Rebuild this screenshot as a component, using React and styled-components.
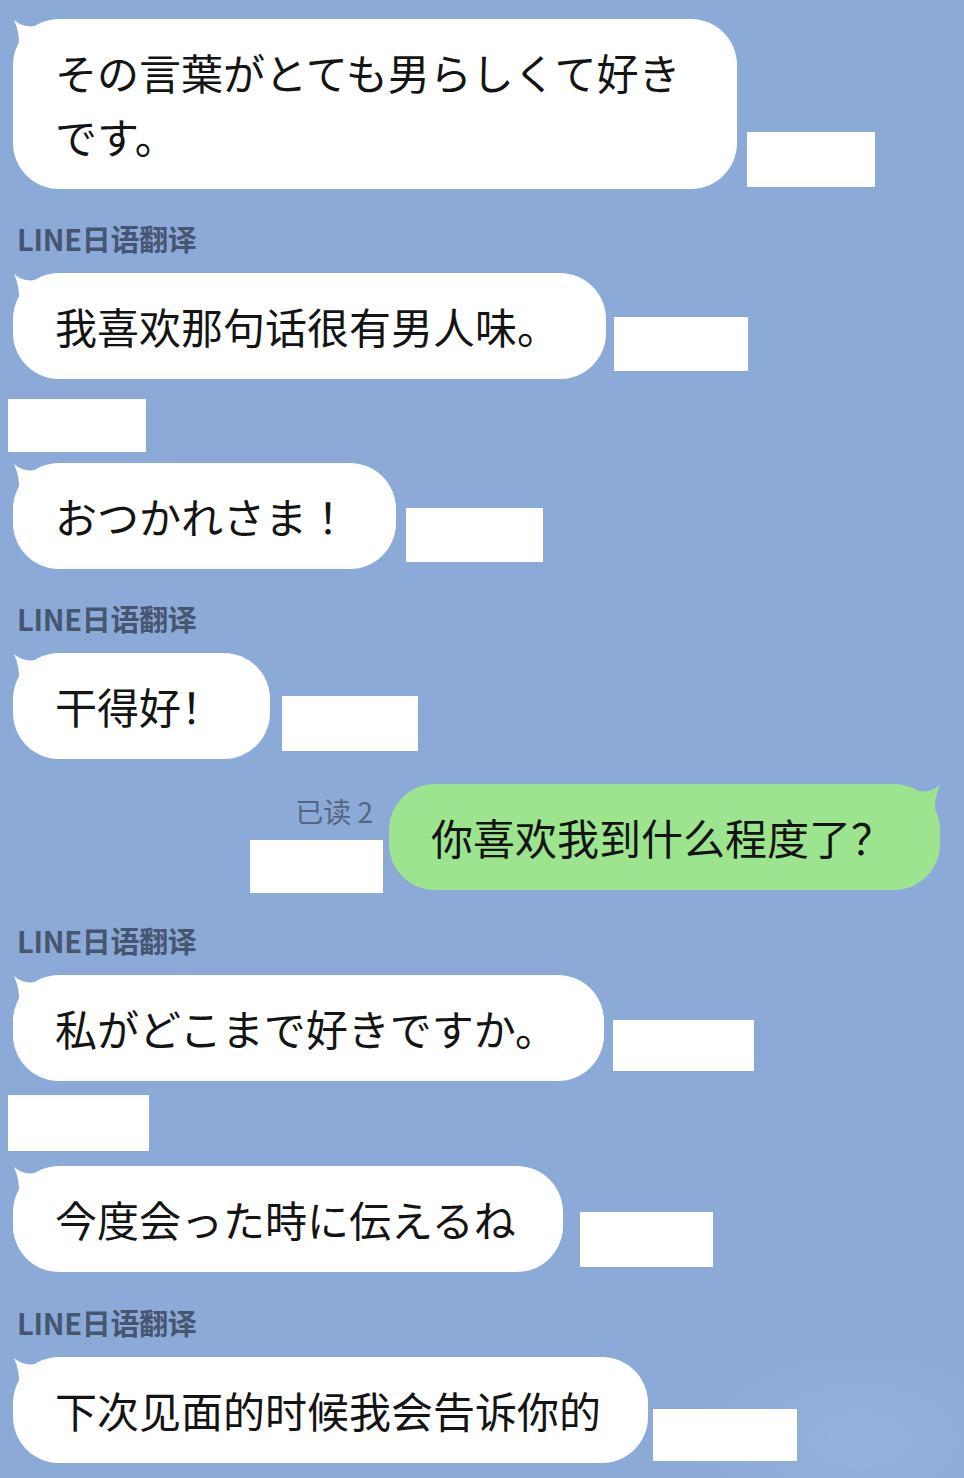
import React from 'react';
import styled, { createGlobalStyle } from 'styled-components';

const GlobalStyle = createGlobalStyle`
  html, body {
    margin: 0;
    padding: 0;
    background: #8baad8;
  }
  body {
    font-family: "Noto Sans CJK SC", "Noto Sans", sans-serif;
  }
`;

const messages = [
  { type: 'in', lang: 'ja', text: 'その言葉がとても男らしくて好きです。', mt: 0, mask: { w: 128, h: 55, mb: 2, ml: 10 } },
  { type: 'label', mt: 31 },
  { type: 'in', lang: 'zh', text: '我喜欢那句话很有男人味。', mt: 17, mask: { w: 134, h: 54, mb: 8, ml: 8 } },
  { type: 'name', mt: 20, w: 138, h: 53 },
  { type: 'in', lang: 'ja', text: 'おつかれさま！', mt: 11, mask: { w: 137, h: 54, mb: 7, ml: 10 } },
  { type: 'label', mt: 31 },
  { type: 'in', lang: 'zh', text: '干得好！', mt: 17, mask: { w: 136, h: 55, mb: 8, ml: 12 } },
  { type: 'out', text: '你喜欢我到什么程度了？', read: '已读 2', mt: 25 },
  { type: 'label', mt: 32 },
  { type: 'in', lang: 'ja', text: '私がどこまで好きですか。', mt: 17, mask: { w: 141, h: 51, mb: 10, ml: 9 } },
  { type: 'name', mt: 14, w: 141, h: 56 },
  { type: 'in', lang: 'ja', text: '今度会った時に伝えるね', mt: 15, mask: { w: 133, h: 55, mb: 5, ml: 17 } },
  { type: 'label', mt: 32 },
  { type: 'in', lang: 'zh', text: '下次见面的时候我会告诉你的', mt: 17, mask: { w: 144, h: 52, mb: 2, ml: 5 } },
];

function Tail({ color, flip }) {
  return (
    <TailSvg $flip={flip} width="36" height="42" viewBox="0 0 36 42">
      <path d="M1 1 Q10 9 22 7 L31 4 L31 42 L6 42 L6 30 Q7 14 1 1 Z" fill={color} />
    </TailSvg>
  );
}

export default function App() {
  return (
    <>
      <GlobalStyle />
      <Chat>
        {messages.map((m, i) => {
          if (m.type === 'label') {
            return <SenderName key={i} $mt={m.mt}>LINE日语翻译</SenderName>;
          }
          if (m.type === 'name') {
            return <NameMask key={i} $mt={m.mt} $w={m.w} $h={m.h} />;
          }
          if (m.type === 'out') {
            return (
              <OutRow key={i} $mt={m.mt}>
                <ReadMeta>
                  <ReadText>{m.read}</ReadText>
                  <Mask $w={133} $h={53} $mb={0} $ml={0} />
                </ReadMeta>
                <Bubble $out lang="zh">
                  <Tail color="#9de48f" flip />
                  {m.text}
                </Bubble>
              </OutRow>
            );
          }
          return (
            <Row key={i} $mt={m.mt}>
              <Bubble lang={m.lang}>
                <Tail color="#ffffff" />
                {m.text}
              </Bubble>
              <Mask $w={m.mask.w} $h={m.mask.h} $mb={m.mask.mb} $ml={m.mask.ml} />
            </Row>
          );
        })}
      </Chat>
    </>
  );
}

const Chat = styled.div`
  box-sizing: border-box;
  width: 964px;
  min-height: 1478px;
  padding: 19px 24px 0 13px;
  display: flex;
  flex-direction: column;
  overflow: hidden;
  background:
    radial-gradient(ellipse 260px 150px at 860px 1440px, rgba(255, 255, 255, 0.09), rgba(255, 255, 255, 0) 70%),
    #8baad8;
`;

const Row = styled.div`
  display: flex;
  align-items: flex-end;
  margin-top: ${p => p.$mt}px;
`;

const OutRow = styled(Row)`
  justify-content: flex-end;
`;

const Bubble = styled.div`
  position: relative;
  box-sizing: border-box;
  max-width: 724px;
  padding: 21px 47px 21px 42px;
  border-radius: 46px;
  background: ${p => (p.$out ? '#9de48f' : '#ffffff')};
  color: #141414;
  font-family: ${p =>
    p.lang === 'ja'
      ? '"Noto Sans CJK JP", "Noto Sans CJK SC", sans-serif'
      : '"Noto Sans CJK SC", "Noto Sans CJK JP", sans-serif'};
  font-size: 42px;
  line-height: 64px;
  font-weight: 400;
  line-break: strict;
`;

const TailSvg = styled.svg`
  position: absolute;
  top: 0;
  ${p => (p.$flip ? 'right: -1px; transform: scaleX(-1);' : 'left: 0;')}
  display: block;
`;

const Mask = styled.div`
  flex-shrink: 0;
  width: ${p => p.$w}px;
  height: ${p => p.$h}px;
  margin-left: ${p => p.$ml}px;
  margin-bottom: ${p => p.$mb}px;
  background: #ffffff;
`;

const NameMask = styled.div`
  width: ${p => p.$w}px;
  height: ${p => p.$h}px;
  margin-top: ${p => p.$mt}px;
  margin-left: -5px;
  background: #ffffff;
`;

const SenderName = styled.div`
  margin-top: ${p => p.$mt}px;
  margin-left: 4px;
  height: 36px;
  font-family: "Noto Sans CJK SC", sans-serif;
  font-size: 29px;
  line-height: 36px;
  font-weight: 700;
  letter-spacing: -0.3px;
  color: #46566f;
`;

const ReadMeta = styled.div`
  display: flex;
  flex-direction: column;
  align-items: flex-end;
  margin-right: 6px;
  margin-bottom: -3px;
`;

const ReadText = styled.div`
  margin-right: 10px;
  margin-bottom: 11px;
  font-family: "Noto Sans CJK SC", sans-serif;
  font-size: 28px;
  line-height: 36px;
  color: #55657f;
`;
